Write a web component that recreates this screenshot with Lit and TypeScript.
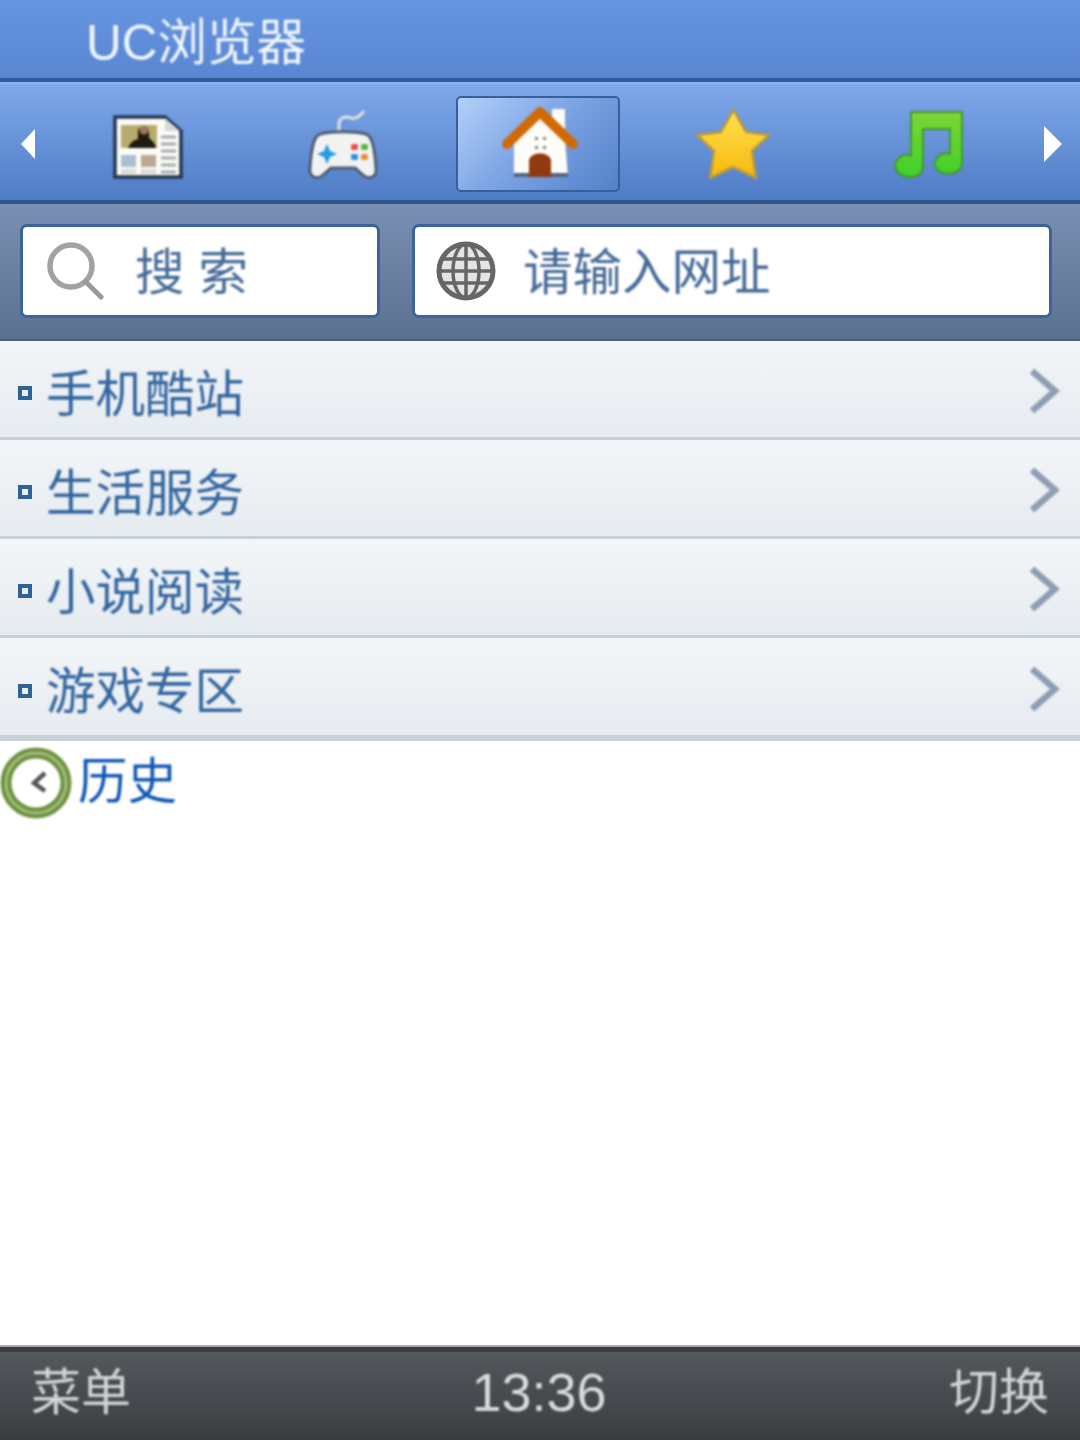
import { LitElement, html, css, svg } from "lit";
import { customElement } from "lit/decorators.js";

const news = svg`<svg class="news" viewBox="0 0 70 64" width="70" height="64">
  <path d="M2 2H52L68 16V62H2Z" fill="#fbfbf6" stroke="#24354f" stroke-width="3.5"/>
  <path d="M52 3V16H67Z" fill="#d5d8dc"/>
  <rect x="8" y="10" width="36" height="23" fill="#b9ab6b"/>
  <path d="M15 33C18 26 22 25 25 24V15C27 11 35 12 36 16V23C39 25 42 28 43 33Z" fill="#1f1a14"/>
  <circle cx="31" cy="15" r="4.5" fill="#a3785e"/>
  <rect x="8" y="40" width="15" height="12" fill="#a9bfcf"/>
  <rect x="28" y="40" width="15" height="12" fill="#bba993"/>
  <rect x="8" y="54" width="15" height="5" fill="#dcdcd8"/>
  <rect x="28" y="54" width="15" height="5" fill="#dcdcd8"/>
  <path d="M48 22H63M48 29H63M48 36H63M48 43H63M48 50H63M48 57H63" stroke="#a8acb0" stroke-width="3"/>
</svg>`;

const pad = svg`<svg viewBox="0 0 70 72" width="70" height="72">
  <path d="M31 32V16C31 9 38 8 43 10C48 12 52 8 56 3" fill="none" stroke="#d6dae2" stroke-width="3.5"/>
  <path d="M12 26C25 23 45 23 58 26C65 28 67 44 68 60C69 70 60 72 55 67L47 60H23L15 67C10 72 1 70 2 60C3 44 5 28 12 26Z" fill="#f1f3f2" stroke="#4f5d74" stroke-width="3"/>
  <path d="M19 36L22 43L29 46L22 49L19 56L16 49L9 46L16 43Z" fill="#259be6"/>
  <rect x="43" y="36" width="7" height="6" rx="2" fill="#ec4c4c"/>
  <rect x="53" y="36" width="7" height="6" rx="2" fill="#58b548"/>
  <rect x="43" y="46" width="7" height="6" rx="2" fill="#2b8fe0"/>
  <rect x="53" y="46" width="7" height="6" rx="2" fill="#ee8b2d"/>
</svg>`;

const house = svg`<svg class="house" viewBox="0 0 76 74" width="76" height="74">
  <path d="M12 36L38 10L50 20V4H63V34L66 72H12Z" fill="#fdfcf8"/>
  <rect x="12" y="68" width="54" height="4" fill="#52657f"/>
  <path d="M27 72V56C27 46 49 46 49 56V72Z" fill="#8f3a10"/>
  <path d="M33 32h3v3h-3zM41 32h3v3h-3zM33 41h3v3h-3zM41 41h3v3h-3z" fill="#8a8a84"/>
  <path d="M5 39L38 7L71 39" fill="none" stroke="#d06a05" stroke-width="10" stroke-linecap="round" stroke-linejoin="round"/>
</svg>`;

const star = svg`<svg viewBox="0 0 74 72" width="74" height="72">
  <defs><linearGradient id="st" x1="0" y1="0" x2="0" y2="1"><stop offset="0" stop-color="#ffe14d"/><stop offset="1" stop-color="#f7b90e"/></linearGradient></defs>
  <path d="M37.5 2L50 24L73 27L56 43L60 70L37 59L14 70L18 43L1 27L25 24Z" fill="url(#st)" stroke="#b99a3c" stroke-width="2.5" stroke-linejoin="round"/>
</svg>`;

const note = svg`<svg class="note" viewBox="0 0 70 68" width="70" height="68">
  <defs><linearGradient id="nt" x1="0" y1="0" x2="0" y2="1"><stop offset="0" stop-color="#7ed535"/><stop offset="1" stop-color="#3fd02a"/></linearGradient></defs>
  <path d="M17 2H68V52C68 62 58 65 50 63C40 61 38 52 44 47C48 43 53 43 56 44V19H29V56C29 66 18 69 10 66C0 63 -1 53 5 48C9 44 14 44 17 46Z" fill="url(#nt)" stroke="#3f9a2c" stroke-width="2"/>
</svg>`;

const glass = svg`<svg viewBox="0 0 60 60" width="60" height="60">
  <circle cx="25" cy="25" r="21" fill="none" stroke="#a2a2a2" stroke-width="5.5"/>
  <path d="M40 41L55 56" stroke="#9a9a9a" stroke-width="5" stroke-linecap="round"/>
</svg>`;

const globe = svg`<svg viewBox="0 0 60 60" width="60" height="60">
  <circle cx="30" cy="30" r="27" fill="#e4e4e4" stroke="#666" stroke-width="5"/>
  <ellipse cx="30" cy="30" rx="13" ry="27" fill="none" stroke="#666" stroke-width="3.5"/>
  <path d="M30 3V57M3 30H57M7 18H53M7 42H53" stroke="#666" stroke-width="3.5"/>
</svg>`;

const chevron = svg`<svg class="chev" viewBox="0 0 32 48" width="32" height="48">
  <path d="M4 4L27 24L4 44" fill="none" stroke="#8d9db3" stroke-width="6.5"/>
</svg>`;

const clock = svg`<svg viewBox="0 0 74 74" width="74" height="74">
  <circle cx="36" cy="37" r="30" fill="#fff" stroke="#6f9440" stroke-width="11"/>
  <circle cx="36" cy="37" r="30" fill="none" stroke="#a9c088" stroke-width="2.5"/>
  <path d="M45 27L34 37L45 45" fill="none" stroke="#555" stroke-width="4.5"/>
</svg>`;

@customElement("app-root")
export class AppRoot extends LitElement {
  static styles = css`
    :host {
      display: flex;
      flex-direction: column;
      width: 1080px;
      height: 1440px;
      background: #fff;
      font-family: "Liberation Sans", "Noto Sans CJK SC", sans-serif;
      font-size: 49.5px;
      overflow: hidden;
    }
    .title {
      flex: none;
      box-sizing: border-box;
      padding: 0 0 0 86px;
      display: flex;
      align-items: center;
      background: linear-gradient(#6595e1, #5a86d1);
      border-bottom: 4px solid #2f5a9c;
      height: 82px;
      color: #f0f5fd;
    }
    .title span { filter: blur(0.8px); position: relative; top: -1px; }
    .tabs {
      height: 122px;
      flex: none;
      box-sizing: border-box;
      padding-top: 4px;
      display: grid;
      grid-template-columns: 50px repeat(5, 195px) 55px;
      align-items: center;
      justify-items: center;
      background: linear-gradient(#7fa8ea, #4f7cc6);
      border-top: 2px solid #8db2ec;
      border-bottom: 4px solid #2e5790;
    }
    .arrow { filter: blur(0.7px); display: flex; }
    .arrow.l { margin-left: 6px; }
    .tab {
      display: flex;
      align-items: center;
      justify-content: center;
      width: 164px;
      height: 96px;
      box-sizing: border-box;
    }
    .tab svg { filter: blur(0.9px); }
    .tab svg.news { margin-top: 6px; }
    .tab svg.house { margin: 0 0 4px 4px; }
    .tab svg.note { margin-left: 2px; }
    .tab.on {
      border: 2px solid #35609c;
      border-radius: 5px;
      background: linear-gradient(135deg, #b4d0fa 0%, #7fa6e4 45%, #5280c9 100%);
    }
    .search {
      height: 137px;
      flex: none;
      box-sizing: border-box;
      padding: 20px 28px 23px 20px;
      display: flex;
      gap: 32px;
      background: linear-gradient(#7b8fb3, #5c7090);
      border-bottom: 2px solid #4f5f78;
    }
    .box {
      box-sizing: border-box;
      height: 94px;
      display: flex;
      align-items: center;
      background: #fff;
      border: 3px solid #3c6498;
      border-radius: 7px;
      color: #456a98;
    }
    .box svg { filter: blur(0.7px); flex: none; }
    .box span { filter: blur(0.9px); position: relative; top: -3px; }
    .s { width: 360px; padding-left: 23px; gap: 29px; }
    .s span { letter-spacing: 14px; }
    .u { flex: 1; padding-left: 21px; gap: 27px; }
    .row {
      box-sizing: border-box;
      height: 99px;
      flex: none;
      display: flex;
      align-items: center;
      padding: 8px 20px 0 18px;
      background: linear-gradient(#f3f6f8, #e6ebf0);
      border-bottom: 3px solid #c6d0da;
      color: #32659f;
    }
    .row.last { height: 103px; border-bottom: 6px solid #c8d0d8; }
    .bullet {
      width: 14px;
      height: 14px;
      box-sizing: border-box;
      border: 4px solid #2f6296;
      background: #e8eef4;
      margin-right: 14px;
      filter: blur(0.5px);
      flex: none;
    }
    .row span { filter: blur(0.9px); flex: 1; position: relative; top: -3px; }
    .row svg { filter: blur(0.8px); }
    .row svg.chev { margin-bottom: 4px; }
    .hist {
      display: flex;
      align-items: center;
      gap: 4px;
      height: 82px;
      flex: none;
      color: #1258b8;
    }
    .hist svg { filter: blur(0.8px); margin-top: 2px; }
    .hist span { filter: blur(0.8px); position: relative; top: -5px; }
    .spacer { flex: 1; }
    .foot {
      height: 95px;
      flex: none;
      box-sizing: border-box;
      display: flex;
      align-items: center;
      justify-content: space-between;
      padding: 0 31px;
      background: linear-gradient(#555a5f, #3a3c40);
      border-top: 2px solid #a9a9a9;
      box-shadow: inset 0 5px 0 #3b3d42;
      color: #d2d4d6;
      font-size: 50px;
    }
    .foot span { filter: blur(0.8px); position: relative; top: -6px; }
    .foot .time { font-size: 54px; color: #d8dadc; top: -2px; left: -1px; }
  `;

  render() {
    const items = ["手机酷站", "生活服务", "小说阅读", "游戏专区"];
    return html`
      <div class="title"><span>UC浏览器</span></div>
      <div class="tabs">
        <div class="arrow l">
          <svg viewBox="0 0 16 32" width="16" height="32"><path d="M15 1V31L1 16Z" fill="#fff"/></svg>
        </div>
        <div class="tab">${news}</div>
        <div class="tab">${pad}</div>
        <div class="tab on">${house}</div>
        <div class="tab">${star}</div>
        <div class="tab">${note}</div>
        <div class="arrow">
          <svg viewBox="0 0 20 38" width="20" height="38"><path d="M1 1V37L19 19Z" fill="#fff"/></svg>
        </div>
      </div>
      <div class="search">
        <div class="box s">${glass}<span>搜索</span></div>
        <div class="box u">${globe}<span>请输入网址</span></div>
      </div>
      ${items.map(
        (t, i) => html`<div class="row ${i === 3 ? "last" : ""}">
          <div class="bullet"></div>
          <span>${t}</span>
          ${chevron}
        </div>`
      )}
      <div class="hist">${clock}<span>历史</span></div>
      <div class="spacer"></div>
      <div class="foot">
        <span>菜单</span>
        <span class="time">13:36</span>
        <span>切换</span>
      </div>
    `;
  }
}
